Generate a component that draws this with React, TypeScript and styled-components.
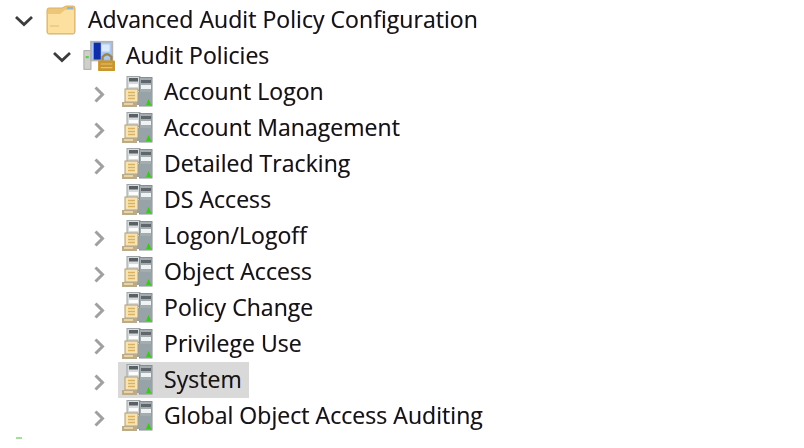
import React from "react";
import styled, { createGlobalStyle } from "styled-components";

const Global = createGlobalStyle`
  html, body { margin: 0; padding: 0; background: #fff; }
  body { width: 804px; height: 448px; overflow: hidden; position: relative; }
`;

const Tree = styled.ul`
  list-style: none;
  margin: 0;
  padding: 2px 0 0 0;
  font-family: "Open Sans", "Noto Sans", sans-serif;
  font-size: 23px;
  letter-spacing: 0.05px;
  color: #141414;
  filter: blur(0.6px);
`;

const Row = styled.li<{ $level: number }>`
  display: flex;
  align-items: center;
  height: 36px;
  padding-left: ${(p) => 12 + p.$level * 38}px;
`;

const ChevronSlot = styled.span`
  display: flex;
  width: 24px;
  height: 24px;
  align-items: center;
  justify-content: center;
  flex: none;
  margin-right: 9px;
`;

const Selection = styled.span<{ $selected: boolean }>`
  display: flex;
  align-items: center;
  height: 36px;
  padding-right: 7px;
  margin-left: -3px;
  padding-left: 3px;
  background: ${(p) => (p.$selected ? "#d9d9d9" : "transparent")};
`;

const IconSlot = styled.span`
  display: flex;
  flex: none;
  width: 32px;
  height: 32px;
  margin-right: 11px;
  align-items: center;
  justify-content: center;
`;

const Label = styled.span`
  white-space: nowrap;
  line-height: 34px;
  padding-bottom: 2px;
  text-shadow: -0.5px 0 rgba(230, 110, 0, 0.4), 0.5px 0 rgba(0, 70, 230, 0.4);
`;

const Speck = styled.div`
  position: absolute;
  left: 16px;
  top: 437px;
  width: 6px;
  height: 2px;
  background: #a8dba0;
`;

const Chevron = ({ open }: { open: boolean }) =>
  open ? (
    <svg width="24" height="24" viewBox="0 0 24 24" fill="none">
      <path d="M4 9 L12 16.500 L20 9" stroke="#3c3c3c" strokeWidth="2.800" />
    </svg>
  ) : (
    <svg width="24" height="24" viewBox="0 0 24 24" fill="none">
      <path d="M7.500 7.500 L14.500 14.500 L7.500 21.500" stroke="#a0a0a0" strokeWidth="3" />
    </svg>
  );

const FolderIcon = () => (
  <svg width="32" height="32" viewBox="0 0 32 32">
    <path d="M2 6 Q2 4 4 4 H17 L21 2 H28 Q30 2 30 4 V28 Q30 30 28 30 H4 Q2 30 2 28Z" fill="#eec677" stroke="#d6b26c" />
    <path d="M3 10 H15 L20 6 H29 V29 H3Z" fill="#fbe0a0" />
    <path d="M22 4 H28" stroke="#86b4dc" strokeWidth="1.800" />
    <path d="M5 22 H14" stroke="#ecca84" strokeWidth="1.600" />
  </svg>
);

const AuditIcon = () => (
  <svg width="36" height="36" viewBox="0 0 36 36">
    <rect x="1" y="12" width="8" height="21" fill="#cfcfcc" stroke="#a3a3a0" />
    <rect x="3" y="18" width="3.500" height="2.500" fill="#5fce45" />
    <rect x="8" y="1" width="26" height="23" fill="#b4b4b4" />
    <rect x="10" y="3" width="22" height="19" fill="#a9c9f0" />
    <path d="M12 3 H20 V22 H12 Z" fill="#0f2fa8" />
    <rect x="21" y="5" width="9" height="8" fill="#dbe9fa" />
    <path d="M22 23 V19 Q27 13 32 19 V23" fill="none" stroke="#9a8550" strokeWidth="2.600" />
    <rect x="17" y="23" width="19" height="12" rx="1" fill="#c9962e" />
    <path d="M20 27 H33 M20 31 H33" stroke="#e6c274" strokeWidth="1.400" />
  </svg>
);

const ServerIcon = () => (
  <svg width="32" height="32" viewBox="0 0 32 32">
    <rect x="6" y="0.500" width="13" height="14" fill="#d5dadd" stroke="#9ea3a6" />
    <rect x="8" y="2" width="9" height="3.500" fill="#595f63" />
    <rect x="8" y="8" width="9" height="3" fill="#fdfdfd" />
    <rect x="18.500" y="1.500" width="12.500" height="28.500" fill="#a2acb1" stroke="#868e93" />
    <rect x="20" y="4" width="10" height="3" fill="#5f676b" />
    <rect x="20" y="9" width="10" height="4" fill="#f0f3f4" />
    <rect x="15" y="16" width="16" height="13" fill="#98a3a8" />
    <path d="M25 29 L27.500 23 L30.500 29Z" fill="#3fc420" />
    <rect x="4" y="13" width="13" height="13" fill="#f7e3b4" stroke="#ae9e7d" />
    <path d="M7 16.500 H14 M7 19.500 H14 M7 22.500 H14" stroke="#d8b25e" strokeWidth="1.400" />
    <rect x="1" y="26" width="15" height="5" fill="#b9ab8c" />
    <rect x="3" y="27" width="9" height="2" fill="#ead39c" />
  </svg>
);

type Item = { label: string; level: number; kind: "folder" | "audit" | "server"; chevron: "open" | "closed" | "none"; selected?: boolean };

const items: Item[] = [
  { label: "Advanced Audit Policy Configuration", level: 0, kind: "folder", chevron: "open" },
  { label: "Audit Policies", level: 1, kind: "audit", chevron: "open" },
  { label: "Account Logon", level: 2, kind: "server", chevron: "closed" },
  { label: "Account Management", level: 2, kind: "server", chevron: "closed" },
  { label: "Detailed Tracking", level: 2, kind: "server", chevron: "closed" },
  { label: "DS Access", level: 2, kind: "server", chevron: "none" },
  { label: "Logon/Logoff", level: 2, kind: "server", chevron: "closed" },
  { label: "Object Access", level: 2, kind: "server", chevron: "closed" },
  { label: "Policy Change", level: 2, kind: "server", chevron: "closed" },
  { label: "Privilege Use", level: 2, kind: "server", chevron: "closed" },
  { label: "System", level: 2, kind: "server", chevron: "closed", selected: true },
  { label: "Global Object Access Auditing", level: 2, kind: "server", chevron: "closed" },
];

const icons = { folder: FolderIcon, audit: AuditIcon, server: ServerIcon };

export default function App() {
  return (
    <>
      <Global />
      <Tree>
        {items.map((it) => {
          const Icon = icons[it.kind];
          return (
            <Row key={it.label} $level={it.level}>
              <ChevronSlot>{it.chevron !== "none" && <Chevron open={it.chevron === "open"} />}</ChevronSlot>
              <Selection $selected={!!it.selected}>
                <IconSlot>
                  <Icon />
                </IconSlot>
                <Label>{it.label}</Label>
              </Selection>
            </Row>
          );
        })}
      </Tree>
      <Speck />
    </>
  );
}
